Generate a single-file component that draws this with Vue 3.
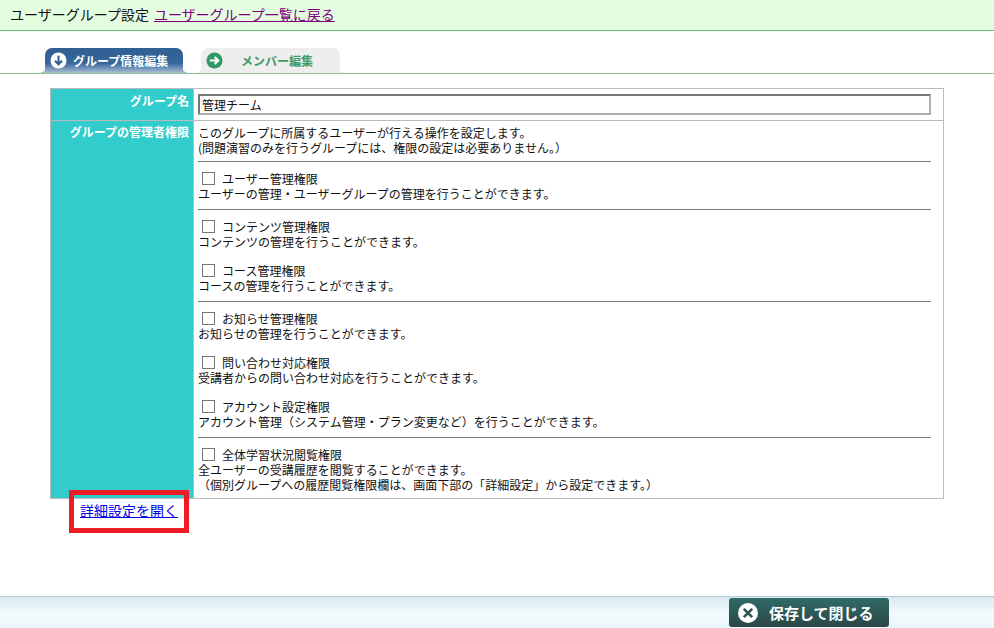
<template>
  <div class="page">
    <header class="top-bar">
      <span>ユーザーグループ設定</span>
      <a href="#" class="back-link">ユーザーグループ一覧に戻る</a>
    </header>

    <div class="tabs">
      <div class="tab active">
        <svg class="tab-icon" viewBox="0 0 18 18">
          <circle cx="9" cy="9" r="8.5" fill="#fff" />
          <path d="M9 4v9M5.2 9.2 9 13l3.8-3.8" fill="none" stroke="#2f5f93" stroke-width="2.2" />
        </svg>
        <span>グループ情報編集</span>
      </div>
      <div class="tab idle">
        <svg class="tab-icon" viewBox="0 0 18 18">
          <circle cx="9" cy="9" r="8.5" fill="#2f9a68" />
          <path d="M4 9h9M9.2 5.2 13 9l-3.8 3.8" fill="none" stroke="#fff" stroke-width="2.2" />
        </svg>
        <span class="idle-label">メンバー編集</span>
      </div>
    </div>

    <main class="content">
      <table class="form-table">
        <tbody>
          <tr>
            <th class="name-th">グループ名</th>
            <td class="name-td"><input class="name-input" type="text" value="管理チーム" /></td>
          </tr>
          <tr>
            <th>グループの管理者権限</th>
            <td class="perm-td">
              <p class="intro">このグループに所属するユーザーが行える操作を設定します。<br />{{ introNote }}</p>
              <section v-for="(group, i) in groups" :key="i" class="perm-group">
                <div v-for="perm in group" :key="perm.name" class="perm">
                  <label class="perm-name"><input type="checkbox" class="check" /><span>{{ perm.name }}</span></label>
                  <div>{{ perm.desc }}</div>
                  <div v-if="perm.note">{{ perm.note }}</div>
                </div>
              </section>
            </td>
          </tr>
        </tbody>
      </table>

      <div class="detail-row">
        <a href="#" class="detail-link">詳細設定を開く</a>
        <div class="red-box"></div>
      </div>
    </main>

    <footer class="bottom-bar">
      <button class="save-btn">
        <svg class="save-icon" viewBox="0 0 20 20">
          <circle cx="10" cy="10" r="10" fill="#fff" />
          <path d="M5.8 5.8l8.4 8.4M14.2 5.8l-8.4 8.4" stroke="#2f5655" stroke-width="2.6" />
        </svg>
        <span>保存して閉じる</span>
      </button>
    </footer>
  </div>
</template>

<script setup>
// 全角カッコはエスケープで書く
const introNote = '(問題演習のみを行うグループには、権限の設定は必要ありません。\uFF09'

const groups = [
  [
    { name: 'ユーザー管理権限', desc: 'ユーザーの管理・ユーザーグループの管理を行うことができます。' }
  ],
  [
    { name: 'コンテンツ管理権限', desc: 'コンテンツの管理を行うことができます。' },
    { name: 'コース管理権限', desc: 'コースの管理を行うことができます。' }
  ],
  [
    { name: 'お知らせ管理権限', desc: 'お知らせの管理を行うことができます。' },
    { name: '問い合わせ対応権限', desc: '受講者からの問い合わせ対応を行うことができます。' },
    { name: 'アカウント設定権限', desc: 'アカウント管理\uFF08システム管理・プラン変更など\uFF09を行うことができます。' }
  ],
  [
    {
      name: '全体学習状況閲覧権限',
      desc: '全ユーザーの受講履歴を閲覧することができます。',
      note: '\uFF08個別グループへの履歴閲覧権限欄は、画面下部の「詳細設定」から設定できます。\uFF09'
    }
  ]
]
</script>

<style>
html, body {
  margin: 0;
  background: #fff;
}
</style>

<style scoped>
.page {
  display: flex;
  flex-direction: column;
  min-height: 100vh;
  font-family: "Noto Sans CJK JP", "Liberation Sans", sans-serif;
  font-size: 12px;
  color: #111;
}

.top-bar {
  height: 30px;
  padding-left: 10px;
  background: #e4fde0;
  border-bottom: 1px solid #6cc06c;
  font-size: 14px;
  line-height: 28px;
}

.back-link {
  color: #800080;
  margin-left: 5px;
}

.tabs {
  display: flex;
  gap: 18px;
  height: 25px;
  margin-top: 17px;
  padding-left: 45px;
  border-bottom: 1px solid #8cc88c;
}

.tab {
  position: relative;
  display: flex;
  align-items: center;
  width: 138px;
  height: 25px;
  box-sizing: border-box;
  padding-left: 5px;
  border-radius: 7px 7px 0 0;
  font-weight: 700;
}

.tab::before,
.tab::after {
  content: "";
  position: absolute;
  bottom: 0;
  width: 4px;
  height: 5px;
}

.tab::before {
  left: -4px;
  background: radial-gradient(circle at 0 0, transparent 4px, var(--flare) 4.5px);
}

.tab::after {
  right: -4px;
  background: radial-gradient(circle at 100% 0, transparent 4px, var(--flare) 4.5px);
}

.tab.active {
  --flare: #a9bfd5;
  background: linear-gradient(#2f5f93 0, #36659a 60%, #a9bfd5 100%);
  color: #fff;
}

.tab.idle {
  --flare: #eeeeee;
  width: 139px;
  background: #eeeeee;
  color: #3a9a6a;
}

.tab-icon {
  width: 17px;
  height: 17px;
  margin-right: 6px;
}

.idle-label {
  margin-left: 12px;
}

.content {
  flex: 1;
  padding: 14px 50px 0;
}

.form-table {
  width: 894px;
  border-collapse: collapse;
  border: 1px solid #bbb;
}

.form-table th {
  width: 143px;
  padding: 3px 4px 0 0;
  box-sizing: border-box;
  background: #32cccc;
  color: #fff;
  text-align: right;
  vertical-align: top;
  font-size: 12px;
  line-height: 15px;
  border-bottom: 1px solid #bbb;
}

.form-table .name-th {
  padding-top: 4px;
}

.form-table td {
  padding: 0 12px 0 4px;
  border-bottom: 1px solid #bbb;
  border-left: 1px solid #bbb;
  line-height: 15px;
}

.name-td {
  height: 31px;
}

.name-input {
  display: block;
  width: 733px;
  height: 21px;
  box-sizing: border-box;
  padding: 1px 2px;
  border: 2px solid;
  border-color: #767676 #b0b0b0 #b0b0b0 #767676;
  font: inherit;
  color: #111;
  outline: none;
}

.perm-td {
  padding-top: 4px !important;
  padding-bottom: 6px !important;
}

.intro {
  margin: 0 0 6px;
}

.perm-group {
  border-top: 1px solid #777;
  padding-top: 9px;
  padding-bottom: 8px;
}

.perm-group:last-child {
  padding-bottom: 0;
}

.perm + .perm {
  margin-top: 14px;
}

.perm-name {
  display: flex;
  align-items: center;
  height: 15px;
  padding-left: 4px;
}

.check {
  appearance: none;
  width: 13px;
  height: 13px;
  margin: 0 7px 0 0;
  border: 1px solid #767676;
  background: #fff;
}

.detail-row {
  position: relative;
  padding: 1px 0 0 30px;
  font-size: 14px;
  line-height: 20px;
}

.detail-link {
  color: #0000ee;
}

.red-box {
  position: absolute;
  left: 19px;
  top: -9px;
  width: 120px;
  height: 43px;
  box-sizing: border-box;
  border: 5px solid #ee1c25;
}

.bottom-bar {
  display: flex;
  height: 31px;
  padding-left: 729px;
  background: linear-gradient(#dbe9f0, #f0fafc 50%, #eaf7fa);
  border-top: 1px solid #b3cbdc;
}

.save-btn {
  display: flex;
  align-items: center;
  width: 160px;
  height: 29px;
  margin-top: 1px;
  padding: 0 0 0 9px;
  border: none;
  border-radius: 3px;
  background: linear-gradient(#2f6b66, #2d4647);
  color: #fff;
  font-family: inherit;
  font-size: 15px;
  font-weight: 700;
}

.save-icon {
  width: 20px;
  height: 20px;
  margin-right: 11px;
}
</style>
